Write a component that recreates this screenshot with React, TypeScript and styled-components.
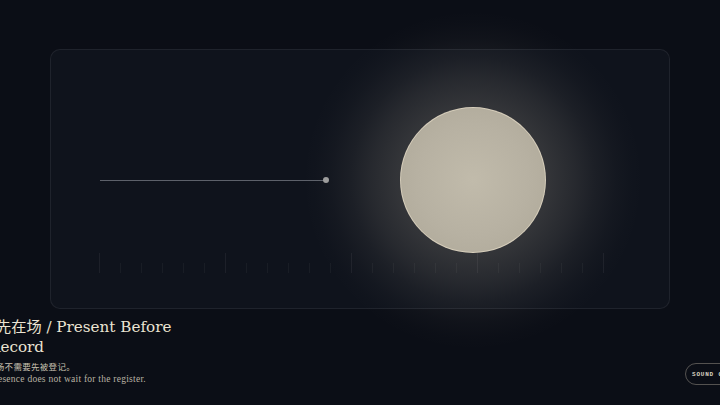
import React from "react";
import styled, { createGlobalStyle } from "styled-components";

const GlobalStyle = createGlobalStyle`
    html, body {
        margin: 0;
        padding: 0;
        background: #0b0e16;
        overflow: hidden;
    }
`;

const Page = styled.div`
    position: relative;
    width: 720px;
    height: 405px;
    padding-top: 49px;
    box-sizing: border-box;
    display: flex;
    flex-direction: column;
    background: #0b0e16;
`;

const Panel = styled.div`
    width: 620px;
    height: 260px;
    margin: 0 auto;
    box-sizing: border-box;
    border: 1px solid rgba(255, 255, 255, 0.07);
    border-radius: 10px;
    background: #0f131c;
    padding-top: 57px;
    display: flex;
    flex-direction: column;
`;

const Stage = styled.div`
    height: 146px;
    display: flex;
    align-items: center;
    padding-left: 49px;
`;

const Track = styled.div`
    position: relative;
    width: 226px;
    height: 1px;
    background: #5d616a;
`;

const Knob = styled.span`
    position: absolute;
    right: -3px;
    top: -3px;
    width: 6px;
    height: 6px;
    border-radius: 50%;
    background: #9c9c9c;
`;

const Orb = styled.div`
    position: relative;
    width: 146px;
    height: 146px;
    margin-left: 74px;

    &::before {
        content: "";
        position: absolute;
        left: -97px;
        top: -97px;
        width: 340px;
        height: 340px;
        border-radius: 50%;
        background: radial-gradient(
            closest-side,
            rgba(212, 202, 182, 0.23) 0%,
            rgba(212, 202, 182, 0.18) 45%,
            rgba(212, 202, 182, 0.12) 60%,
            rgba(212, 202, 182, 0.065) 72%,
            rgba(212, 202, 182, 0.028) 84%,
            rgba(212, 202, 182, 0.008) 93%,
            rgba(212, 202, 182, 0) 100%
        );
    }
`;

const Disc = styled.div`
    position: relative;
    width: 146px;
    height: 146px;
    box-sizing: border-box;
    border-radius: 50%;
    border: 1px solid rgba(225, 216, 196, 0.75);
    background: radial-gradient(circle at 50% 50%, #c1bbab 0%, #b7b1a2 55%, #ada797 100%);
`;

const Ticks = styled.div`
    height: 20px;
    display: flex;
    align-items: flex-end;
    gap: 20px;
    padding-left: 48px;
`;

const Tick = styled.span<{ $tall?: boolean }>`
    width: 1px;
    height: ${(p) => (p.$tall ? "20px" : "10px")};
    background: rgba(255, 255, 255, ${(p) => (p.$tall ? 0.06 : 0.045)});
`;

const Caption = styled.div`
    margin: 8px 0 0 -11px;
    width: 190px;
`;

const Title = styled.h1`
    margin: 0;
    font-family: "DejaVu Serif", "Noto Sans CJK SC", serif;
    font-weight: 400;
    font-size: 15.2px;
    line-height: 20px;
    color: #ece4d3;
    text-indent: 7px;
`;

const Sub = styled.p`
    margin: 3px 0 0 -2px;
    font-family: "Noto Sans CJK SC", sans-serif;
    font-size: 8.5px;
    line-height: 13px;
    letter-spacing: 0.3px;
    color: #c9c1b1;
`;

const SubEn = styled.p`
    margin: 0;
    font-family: "Liberation Serif", serif;
    font-size: 9.5px;
    line-height: 13px;
    letter-spacing: 0.25px;
    color: #b9b2a3;
`;

const SoundButton = styled.button`
    position: absolute;
    left: 685px;
    top: 363px;
    height: 22px;
    padding: 0 8px 0 6px;
    border: 1px solid rgba(220, 210, 190, 0.35);
    border-radius: 11px;
    background: transparent;
    color: #d9d1c0;
    font-family: "Liberation Mono", monospace;
    font-weight: 700;
    font-size: 6px;
    letter-spacing: 0.8px;
    white-space: nowrap;
`;

const tickCount = 25;

export default function App() {
    return (
        <>
            <GlobalStyle />
            <Page>
                <Panel>
                    <Stage>
                        <Track>
                            <Knob />
                        </Track>
                        <Orb>
                            <Disc />
                        </Orb>
                    </Stage>
                    <Ticks>
                        {Array.from({ length: tickCount }).map((_, i) => (
                            <Tick key={i} $tall={i % 6 === 0} />
                        ))}
                    </Ticks>
                </Panel>
                <Caption>
                    <Title>先在场 / Present Before Record</Title>
                    <Sub>在场不需要先被登记。</Sub>
                    <SubEn>Presence does not wait for the register.</SubEn>
                </Caption>
                <SoundButton>SOUND ON</SoundButton>
            </Page>
        </>
    );
}
